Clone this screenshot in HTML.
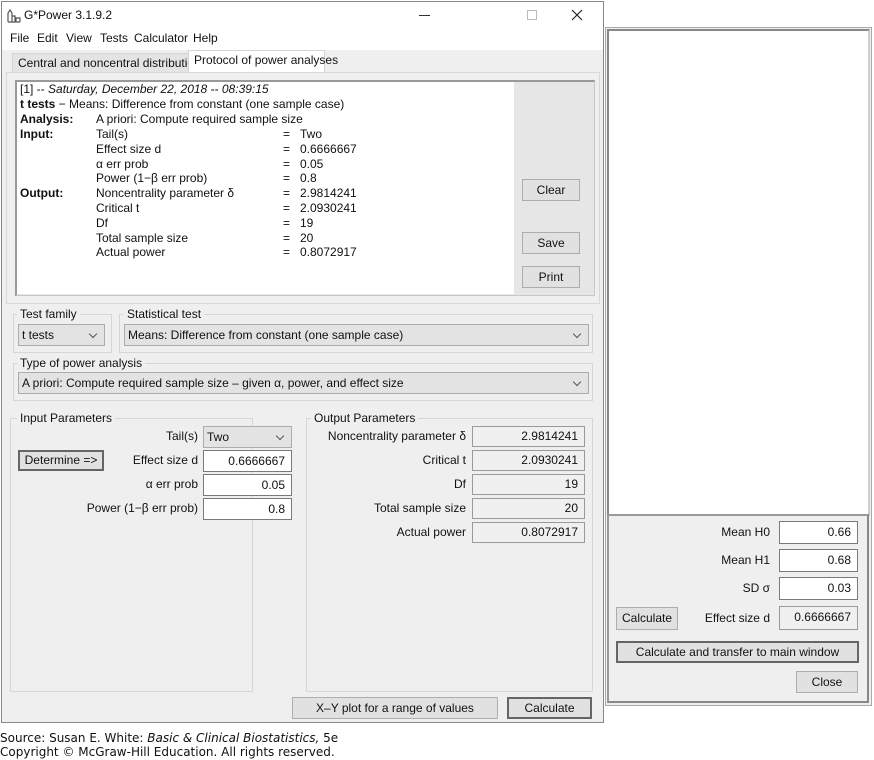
<!DOCTYPE html>
<html><head><meta charset="utf-8"><style>
*{box-sizing:border-box;margin:0;padding:0}
body{width:874px;height:760px;background:#fff;position:relative;font-family:"Liberation Sans","DejaVu Sans",sans-serif;font-size:12px;color:#111;overflow:hidden}
.a{position:absolute}
.t{position:absolute;white-space:nowrap;line-height:15px}
.grp{position:absolute;border:1px solid #d6d6d6}
.lbl{position:absolute;background:#efefef;padding:0 3px;white-space:nowrap;line-height:14px}
.combo{position:absolute;background:#e3e3e3;border:1px solid #acacac;line-height:20px;padding-left:3px;white-space:nowrap}
.combo:after{content:"";position:absolute;right:8px;top:6px;width:5px;height:5px;border-right:1px solid #555;border-bottom:1px solid #555;transform:rotate(45deg)}
.fld{position:absolute;background:#fff;border:1px solid #7a7a7a;text-align:right;padding-right:6px;line-height:20px}
.ofld{position:absolute;background:#f0f0f0;border:1px solid #9a9a9a;text-align:right;padding-right:6px;line-height:18px}
.btn{position:absolute;background:#e1e1e1;border:1px solid #adadad;text-align:center;line-height:19px}
.rl{position:absolute;text-align:right;white-space:nowrap;line-height:15px}
</style></head><body>
<!-- main window -->
<div class="a" style="left:1px;top:1px;width:603px;height:722px;border:1px solid #888;background:#efefef"></div>
<div class="a" style="left:2px;top:2px;width:601px;height:48px;background:#fff"></div>
<svg class="a" style="left:7px;top:9px" width="14" height="14" viewBox="0 0 14 14"><path d="M1 13V4l2-3 2 3v9M5 13V7h3v6M9 13V9h4v4M1 13h12" fill="none" stroke="#555" stroke-width="1.2"/></svg>
<div class="t" style="left:24px;top:8px">G*Power 3.1.9.2</div>
<div class="a" style="left:419px;top:15px;width:11px;height:1px;background:#333"></div>
<div class="a" style="left:527px;top:10px;width:10px;height:10px;border:1px solid #bbb"></div>
<svg class="a" style="left:571px;top:9px" width="12" height="12"><path d="M1 1L11 11M11 1L1 11" stroke="#222" stroke-width="1.2"/></svg>
<div class="t" style="left:10px;top:31px">File</div>
<div class="t" style="left:37px;top:31px">Edit</div>
<div class="t" style="left:66px;top:31px">View</div>
<div class="t" style="left:100px;top:31px">Tests</div>
<div class="t" style="left:134px;top:31px">Calculator</div>
<div class="t" style="left:193px;top:31px">Help</div>
<!-- tabs -->
<div class="a" style="left:12px;top:53px;width:177px;height:20px;background:#e4e4e4;border:1px solid #d4d4d4;border-bottom:none"></div>
<div class="t" style="left:18px;top:56px">Central and noncentral distributions</div>
<div class="a" style="left:188px;top:50px;width:137px;height:24px;background:#fff;border:1px solid #d4d4d4;border-bottom:none"></div>
<div class="t" style="left:194px;top:53px">Protocol of power analyses</div>
<div class="a" style="left:6px;top:72px;width:594px;height:232px;border:1px solid #d8d8d8;background:#efefef"></div>
<!-- protocol -->
<div class="a" style="left:15px;top:80px;width:580px;height:216px;border:1px solid #c8c8c8;border-top:2px solid #999;border-left:2px solid #999;background:#e6e6e6"></div>
<div class="a" style="left:17px;top:82px;width:497px;height:212px;background:#fff"></div>
<div class="t" style="left:20px;top:82px">[1] -- <i>Saturday, December 22, 2018 -- 08:39:15</i></div>
<div class="t" style="left:20px;top:97px"><b>t tests</b> − Means: Difference from constant (one sample case)</div>
<div class="t" style="left:20px;top:112px"><b>Analysis:</b></div><div class="t" style="left:96px;top:112px">A priori: Compute required sample size</div>
<div class="t" style="left:20px;top:127px"><b>Input:</b></div>
<div class="t" style="left:20px;top:186px"><b>Output:</b></div>
<div class="t" style="left:96px;top:127px;line-height:14.8px">Tail(s)<br>Effect size d<br>α err prob<br>Power (1−β err prob)<br>Noncentrality parameter δ<br>Critical t<br>Df<br>Total sample size<br>Actual power</div>
<div class="t" style="left:283px;top:127px;line-height:14.8px">=<br>=<br>=<br>=<br>=<br>=<br>=<br>=<br>=</div>
<div class="t" style="left:300px;top:127px;line-height:14.8px">Two<br>0.6666667<br>0.05<br>0.8<br>2.9814241<br>2.0930241<br>19<br>20<br>0.8072917</div>
<div class="btn" style="left:522px;top:179px;width:58px;height:22px;line-height:20px">Clear</div>
<div class="btn" style="left:522px;top:232px;width:58px;height:22px;line-height:20px">Save</div>
<div class="btn" style="left:522px;top:266px;width:58px;height:22px;line-height:20px">Print</div>
<!-- test family -->
<div class="grp" style="left:13px;top:314px;width:99px;height:39px"></div><div class="lbl" style="left:17px;top:307px">Test family</div>
<div class="combo" style="left:18px;top:324px;width:87px;height:22px">t tests</div>
<div class="grp" style="left:119px;top:314px;width:474px;height:39px"></div><div class="lbl" style="left:124px;top:307px">Statistical test</div>
<div class="combo" style="left:124px;top:324px;width:465px;height:22px">Means: Difference from constant (one sample case)</div>
<div class="grp" style="left:13px;top:363px;width:580px;height:38px"></div><div class="lbl" style="left:17px;top:356px">Type of power analysis</div>
<div class="combo" style="left:18px;top:372px;width:571px;height:22px">A priori: Compute required sample size – given α, power, and effect size</div>
<!-- input params -->
<div class="grp" style="left:10px;top:418px;width:243px;height:274px"></div><div class="lbl" style="left:17px;top:411px">Input Parameters</div>
<div class="rl" style="left:60px;width:138px;top:429px">Tail(s)</div>
<div class="combo" style="left:203px;top:426px;width:89px;height:22px">Two</div>
<div class="btn" style="left:18px;top:450px;width:86px;height:21px;border:2px solid #666;line-height:17px">Determine =&gt;</div>
<div class="rl" style="left:60px;width:138px;top:453px">Effect size d</div>
<div class="fld" style="left:203px;top:450px;width:89px;height:22px">0.6666667</div>
<div class="rl" style="left:60px;width:138px;top:477px">α err prob</div>
<div class="fld" style="left:203px;top:474px;width:89px;height:22px">0.05</div>
<div class="rl" style="left:40px;width:158px;top:501px">Power (1−β err prob)</div>
<div class="fld" style="left:203px;top:498px;width:89px;height:22px">0.8</div>
<!-- output params -->
<div class="grp" style="left:306px;top:418px;width:287px;height:274px"></div><div class="lbl" style="left:311px;top:411px">Output Parameters</div>
<div class="rl" style="left:300px;width:166px;top:429px">Noncentrality parameter δ</div>
<div class="ofld" style="left:472px;top:426px;width:113px;height:21px">2.9814241</div>
<div class="rl" style="left:300px;width:166px;top:453px">Critical t</div>
<div class="ofld" style="left:472px;top:450px;width:113px;height:21px">2.0930241</div>
<div class="rl" style="left:300px;width:166px;top:477px">Df</div>
<div class="ofld" style="left:472px;top:474px;width:113px;height:21px">19</div>
<div class="rl" style="left:300px;width:166px;top:501px">Total sample size</div>
<div class="ofld" style="left:472px;top:498px;width:113px;height:21px">20</div>
<div class="rl" style="left:300px;width:166px;top:525px">Actual power</div>
<div class="ofld" style="left:472px;top:522px;width:113px;height:21px">0.8072917</div>
<div class="btn" style="left:292px;top:697px;width:206px;height:22px;line-height:20px">X–Y plot for a range of values</div>
<div class="btn" style="left:507px;top:697px;width:85px;height:22px;border:2px solid #666;line-height:18px">Calculate</div>
<!-- right window -->
<div class="a" style="left:605px;top:27px;width:267px;height:679px;border:1px solid #aaa;background:#efefef"></div>
<div class="a" style="left:607px;top:29px;width:263px;height:487px;border:2px solid #888;border-right-color:#ccc;border-bottom-color:#ccc;background:#fff"></div>
<div class="a" style="left:607px;top:514px;width:262px;height:189px;border:2px solid #888;border-top-color:#999;border-left-color:#999;background:#efefef"></div>
<div class="rl" style="left:680px;width:90px;top:525px">Mean H0</div>
<div class="fld" style="left:779px;top:521px;width:79px;height:23px">0.66</div>
<div class="rl" style="left:680px;width:90px;top:553px">Mean H1</div>
<div class="fld" style="left:779px;top:549px;width:79px;height:23px">0.68</div>
<div class="rl" style="left:680px;width:90px;top:581px">SD σ</div>
<div class="fld" style="left:779px;top:577px;width:79px;height:23px">0.03</div>
<div class="btn" style="left:616px;top:607px;width:62px;height:23px;line-height:21px">Calculate</div>
<div class="rl" style="left:680px;width:90px;top:611px">Effect size d</div>
<div class="ofld" style="left:779px;top:606px;width:79px;height:24px;line-height:21px">0.6666667</div>
<div class="btn" style="left:616px;top:641px;width:243px;height:22px;border:2px solid #666;line-height:18px">Calculate and transfer to main window</div>
<div class="btn" style="left:796px;top:671px;width:62px;height:22px;line-height:20px">Close</div>
<!-- footer -->
<div class="t" style="left:0;top:731px;font-family:'DejaVu Sans',sans-serif;font-size:12px">Source: Susan E. White: <i>Basic &amp; Clinical Biostatistics,</i> 5e</div>
<div class="t" style="left:0;top:745px;font-family:'DejaVu Sans',sans-serif;font-size:12px">Copyright © McGraw-Hill Education. All rights reserved.</div>
</body></html>
